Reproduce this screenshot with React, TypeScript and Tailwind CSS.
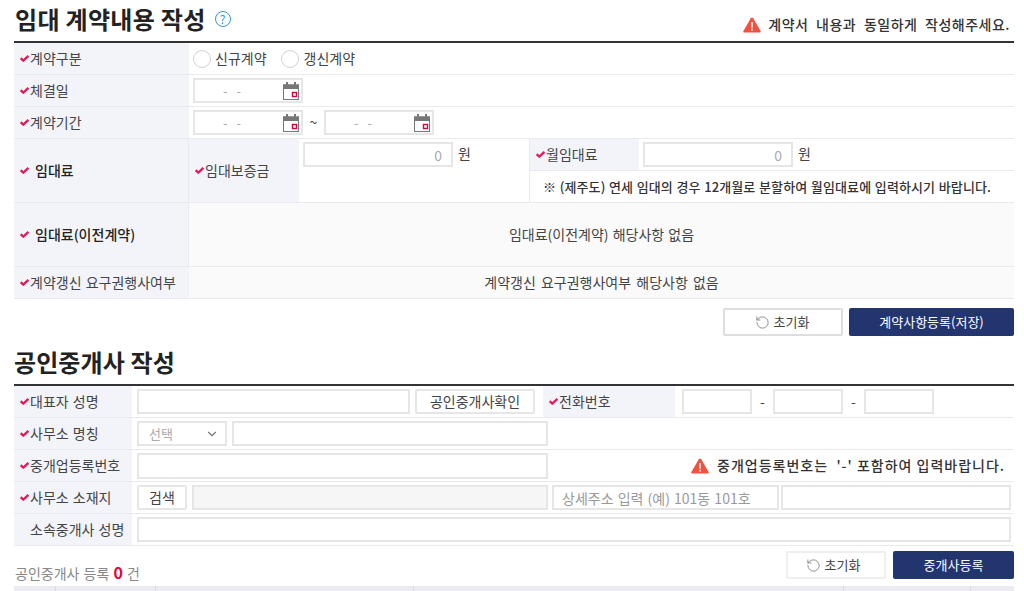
import { ChevronDown, RotateCcw } from 'lucide-react';

const Check = () => (
  <svg width="9" height="7" viewBox="0 0 9 7" className="shrink-0">
    <path d="M0.6 3.2 L3.3 5.6 L8.4 0.9" fill="none" stroke="#e8185c" strokeWidth="2.3" />
  </svg>
);

const Calendar = () => (
  <svg width="16" height="18" viewBox="0 0 16 18" className="shrink-0">
    <rect x="0.5" y="3" width="15" height="14.5" fill="#fff" stroke="#777" />
    <rect x="0" y="2.5" width="16" height="4.5" fill="#777" />
    <rect x="3" y="0" width="2" height="3" fill="#777" />
    <rect x="11" y="0" width="2" height="3" fill="#777" />
    <rect x="9.5" y="10.5" width="4" height="4" fill="#fff" stroke="#d9043d" strokeWidth="1.4" />
  </svg>
);

const Warning = () => (
  <svg width="18" height="16" viewBox="0 0 18 16" className="shrink-0">
    <path d="M9 0.6 C9.5 0.6 9.9 0.9 10.2 1.3 L17.6 14 C18 14.8 17.5 15.6 16.7 15.6 L1.3 15.6 C0.5 15.6 0 14.8 0.4 14 L7.8 1.3 C8.1 0.9 8.5 0.6 9 0.6 Z" fill="#ef5240" />
    <rect x="8.2" y="5.2" width="1.6" height="5.4" fill="#fff" />
    <rect x="8.2" y="11.8" width="1.6" height="1.7" fill="#fff" />
  </svg>
);

const Label = ({ text, w, bold, check = true }: { text: string; w: string; bold?: boolean; check?: boolean }) => (
  <div className={`${w} shrink-0 self-stretch bg-[#f3f4f9] flex items-center pl-[6px]`}>
    {check ? <Check /> : <span className="w-[9px]" />}
    <span className={bold ? 'ml-[6px] font-medium text-[#222]' : 'ml-px [word-spacing:1px]'}>{text}</span>
  </div>
);

const inputBase = 'h-[25px] border-2 border-[#e6e6e6] px-2 outline-none';

const DateInput = () => (
  <div className={`${inputBase} bg-white w-[110px] flex items-center justify-between pr-[2px]`}>
    <span className="ml-[20px] text-[#aaa] text-[13px] tracking-[9px]">--</span>
    <Calendar />
  </div>
);

const Won = () => (
  <div className="flex items-start gap-[5px]">
    <input placeholder="0" className={`${inputBase} bg-white w-[150px] text-right pr-[9px] placeholder:text-[#aaa]`} />
    <span className="leading-[22px]">원</span>
  </div>
);

const Row = ({ children, className = 'h-[32px]' }: { children: React.ReactNode; className?: string }) => (
  <div className={`${className} flex items-center border-b border-[#e9e9ef]`}>{children}</div>
);

const ResetButton = ({ w, light }: { w: string; light?: boolean }) => (
  <button className={`${w} h-[28px] bg-white border-2 ${light ? 'border-[#efeff2] pr-[6px]' : 'border-[#dedede] pr-[2px]'} rounded-[2px] flex items-center justify-center gap-[4px] text-[13px]`}>
    <RotateCcw size={15} strokeWidth={1.4} color="#808080" />
    초기화
  </button>
);

const SaveButton = ({ w, text }: { w: string; text: string }) => (
  <button className={`${w} h-[28px] bg-[#22356f] text-white rounded-[2px] text-[13px]`}>{text}</button>
);

export default function App() {
  return (
    <div
      className="h-[591px] overflow-hidden bg-white text-[14px] text-[#444] px-[14px] w-[1028px]"
      style={{ fontFamily: '"Noto Sans CJK KR", "Liberation Sans", sans-serif' }}
    >
      <div className="w-[1000px]">
        {/* 임대 계약내용 작성 */}
        <div className="h-[41px] flex items-start justify-between">
          <div className="flex items-center pl-px h-[38px]">
            <h2 className="text-[24px] font-bold text-[#222] tracking-[0.3px]">임대 계약내용 작성</h2>
            <span className="ml-[9px] w-[16px] h-[16px] rounded-full border border-[#3797d6] text-[#3797d6] text-[12px] leading-[14px] text-center">?</span>
          </div>
          <div className="flex items-center mt-[14px] pr-[4px] font-medium text-[#333] gap-[7px] tracking-[0.5px] [word-spacing:4px]">
            <Warning />
            계약서 내용과 동일하게 작성해주세요.
          </div>
        </div>
        <div className="border-t-2 border-[#333]">
          <Row>
            <Label text="계약구분" w="w-[175px]" />
            <div className="flex items-center ml-[4px]">
              <span className="w-[18px] h-[18px] rounded-full border-[1.5px] border-[#d2d2d2]" />
              <span className="ml-[4px]">신규계약</span>
              <span className="ml-[14px] w-[18px] h-[18px] rounded-full border-[1.5px] border-[#d2d2d2]" />
              <span className="ml-[5px]">갱신계약</span>
            </div>
          </Row>
          <Row>
            <Label text="체결일" w="w-[175px]" />
            <div className="ml-[4px]"><DateInput /></div>
          </Row>
          <Row>
            <Label text="계약기간" w="w-[175px]" />
            <div className="ml-[4px] flex items-center">
              <DateInput />
              <span className="w-[21px] text-center">~</span>
              <DateInput />
            </div>
          </Row>
          <Row className="h-[64px]">
            <Label text="임대료" w="w-[174px]" bold />
            <div className="self-stretch w-px bg-[#e9e9ef]" />
            <Label text="임대보증금" w="w-[110px]" />
            <div className="self-stretch w-[230px] pl-[4px] pt-[3px]"><Won /></div>
            <div className="self-stretch flex-1 border-l border-[#e9e9ef] flex flex-col">
              <div className="h-[32px] flex border-b border-[#e9e9ef]">
                <Label text="월임대료" w="w-[109px]" />
                <div className="pl-[4px] pt-[3px]"><Won /></div>
              </div>
              <div className="flex-1 flex items-center pl-[13px] text-[13px] font-medium text-[#333] tracking-[0.12px] [word-spacing:0.5px]">
                ※ (제주도) 연세 임대의 경우 12개월로 분할하여 월임대료에 입력하시기 바랍니다.
              </div>
            </div>
          </Row>
          <Row className="h-[64px]">
            <Label text="임대료(이전계약)" w="w-[174px]" bold />
            <div className="self-stretch w-px bg-[#e9e9ef]" />
            <div className="self-stretch flex-1 bg-[#fafafa] flex items-center justify-center [word-spacing:1px]">임대료(이전계약) 해당사항 없음</div>
          </Row>
          <Row>
            <Label text="계약갱신 요구권행사여부" w="w-[175px]" />
            <div className="self-stretch flex-1 bg-[#fafafa] flex items-center justify-center [word-spacing:2px]">계약갱신 요구권행사여부 해당사항 없음</div>
          </Row>
        </div>
        <div className="flex justify-end gap-[6px] mt-[9px]">
          <ResetButton w="w-[120px]" />
          <SaveButton w="w-[165px]" text="계약사항등록(저장)" />
        </div>

        {/* 공인중개사 작성 */}
        <div className="h-[48px] flex items-end pb-[4px]">
          <h2 className="text-[24px] font-bold text-[#222] tracking-[0.1px]">공인중개사 작성</h2>
        </div>
        <div className="border-t-2 border-[#333]">
          <Row>
            <Label text="대표자 성명" w="w-[118px]" />
            <input className={`${inputBase} bg-white ml-[5px] w-[273px]`} />
            <button className="ml-[5px] w-[120px] h-[25px] border-2 border-[#e6e6e6] rounded-[2px]">공인중개사확인</button>
            <div className="ml-[8px]" />
            <Label text="전화번호" w="w-[132px]" />
            <input className={`${inputBase} bg-white ml-[7px] w-[70px]`} />
            <span className="w-[21px] text-center">-</span>
            <input className={`${inputBase} bg-white w-[70px]`} />
            <span className="w-[21px] text-center">-</span>
            <input className={`${inputBase} bg-white w-[70px]`} />
          </Row>
          <Row>
            <Label text="사무소 명칭" w="w-[118px]" />
            <div className={`${inputBase} bg-white ml-[5px] w-[90px] flex items-center justify-between pl-[10px] pr-[6px] text-[#aaa] text-[13px]`}>
              선택
              <ChevronDown size={14} color="#777" strokeWidth={2} />
            </div>
            <input className={`${inputBase} bg-white ml-[5px] w-[316px]`} />
          </Row>
          <Row>
            <Label text="중개업등록번호" w="w-[118px]" />
            <input className={`${inputBase} bg-white ml-[5px] w-[411px] h-[26px]`} />
            <div className="flex-1 flex items-center justify-end pr-[9px] gap-[8px] font-medium text-[#333] tracking-[1px]">
              <Warning />
              <span className="whitespace-pre">중개업등록번호는  '-' 포함하여 입력바랍니다.</span>
            </div>
          </Row>
          <Row>
            <Label text="사무소 소재지" w="w-[118px]" />
            <button className="ml-[5px] w-[50px] h-[25px] border-2 border-[#e6e6e6] rounded-[2px]">검색</button>
            <input className={`${inputBase} ml-[5px] w-[356px] bg-[#f6f6f6]`} />
            <input placeholder="상세주소 입력 (예) 101동 101호" className={`${inputBase} bg-white ml-[4px] w-[227px] placeholder:text-[#999] [word-spacing:1px]`} />
            <input className={`${inputBase} bg-white ml-[2px] w-[230px]`} />
          </Row>
          <Row>
            <Label text="소속중개사 성명" w="w-[118px]" check={false} />
            <input className={`${inputBase} bg-white ml-[5px] w-[874px]`} />
          </Row>
        </div>
        <div className="flex items-end justify-between mt-[5px] h-[28px]">
          <div className="text-[#888] ml-px leading-[14px] mb-[-1px] [word-spacing:1px]">
            공인중개사 등록 <span className="text-[#e8043a] font-bold text-[16px]">0</span> 건
          </div>
          <div className="flex gap-[7px]">
            <ResetButton w="w-[100px]" light />
            <SaveButton w="w-[121px]" text="중개사등록" />
          </div>
        </div>
        <div className="mt-[7px] h-[32px] bg-[#ebebf1] flex">
          <div className="w-[42px] border-r border-[#dcdce4]" />
          <div className="w-[100px] border-r border-[#dcdce4]" />
          <div className="w-[258px] border-r border-[#dcdce4]" />
          <div className="w-[430px] border-r border-[#dcdce4]" />
          <div className="w-[127px] border-r border-[#dcdce4]" />
        </div>
      </div>
    </div>
  );
}
